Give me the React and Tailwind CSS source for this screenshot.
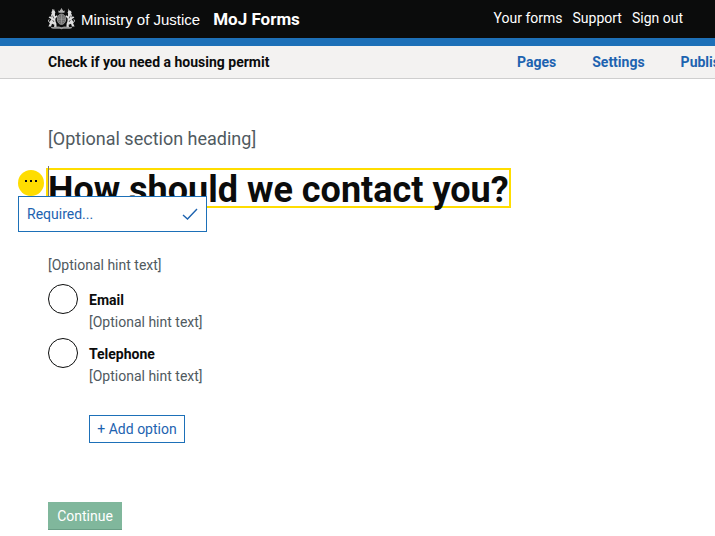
import { useState } from "react";

const headerLinks = ["Your forms", "Support", "Sign out"];
const options = ["Email", "Telephone"];

function Lion({ unicorn }) {
  return (
    <g>
      <circle cx="5.4" cy="4.4" r="1.9" />
      <path d="M4.2 5.4C2.6 6.3 2.9 8 4 9.4L2 8.2.6 9.6 3.4 11.2C2.4 12.4 1.2 14 1.8 15.6L.4 18.4H3L4 15.8 6.4 16.8 6 19.4H8.6L8.4 15.4C7.6 13.6 7 12 7.6 10.2L9.6 8.6 9 7.2 7 8.2C7 7 7.2 6.2 6.6 5.2Z" />
      <path d="M2.4 15C.2 14 .2 12 1.2 11.4" fill="none" stroke="currentColor" strokeWidth=".9" />
      {unicorn ? <path d="M5.4 3 6.8.2 6.6 3.4Z" /> : <path d="M4 2.8 4.2 1 5.2 2 6 1 6.6 2.8Z" />}
      <path d="M4.6 7.6 5.8 10.4M4.6 12 6 14" fill="none" stroke="#0b0c0c" strokeWidth=".6" />
    </g>
  );
}

function Crest() {
  return (
    <svg viewBox="0 0 27 22" className="h-[22px] w-[27px] shrink-0 text-[#dedede]" fill="currentColor" aria-hidden="true">
      <Lion />
      <g transform="translate(27 0) scale(-1 1)">
        <Lion unicorn />
      </g>
      <path d="M10.6 4.8 10.2 2.4 11.8 3 12.4 1.4 13.1 1.4V.2H13.9V1.4L14.6 1.4 15.2 3 16.8 2.4 16.4 4.8Z" fill="#b4b4b4" />
      <ellipse cx="13.5" cy="11.2" rx="4.2" ry="5.2" fill="#6c6c6c" stroke="#a4a4a4" strokeWidth=".8" />
      <path d="M13.5 6.6V15.8M9.8 11.2H17.2" fill="none" stroke="#a8a8a8" strokeWidth=".6" />
      <path d="M11 9.2H12.4M14.6 9.2H16M11 13.4H12.4M14.6 13.4H16" stroke="#8e8e8e" strokeWidth=".9" />
      <path d="M2.6 18.4C6 20.4 9 17.4 13.5 19.2 18 17.4 21 20.4 24.4 18.4L23.6 20.2C20 21.6 17 19.8 13.5 21.2 10 19.8 7 21.6 3.4 20.2Z" fill="#999" />
    </svg>
  );
}

function Header() {
  return (
    <header className="flex h-[46px] items-center border-b-8 border-[#1d70b8] bg-[#0b0c0c] pl-12 pr-8 text-white">
      <Crest />
      <span className="ml-1.5 pt-0.5 font-['Liberation_Sans',sans-serif] text-[15px]">Ministry of Justice</span>
      <a href="#home" className="ml-[13px] pt-0.5 text-[17px] font-bold">MoJ Forms</a>
      <nav aria-label="Account" className="ml-auto flex gap-2.5 pb-0.5 text-sm">
        {headerLinks.map((label) => (
          <a key={label} href="#account">{label}</a>
        ))}
      </nav>
    </header>
  );
}

function SubNav() {
  return (
    <div className="flex h-[33px] items-center overflow-hidden border-b border-[#cecece] bg-[#f3f2f1] pl-12 text-sm font-bold">
      <p className="w-[469px] shrink-0">Check if you need a housing permit</p>
      <nav aria-label="Form" className="flex gap-9 text-[#1d63b0]">
        <a href="#pages">Pages</a>
        <a href="#settings">Settings</a>
        <a href="#publishing">Publishing</a>
      </nav>
    </div>
  );
}

export default function App() {
  const [choice, setChoice] = useState("");
  return (
    <div className="min-h-screen overflow-x-hidden bg-white font-['Roboto',sans-serif] text-[#0b0c0c]">
      <Header />
      <SubNav />
      <main className="pl-12 pt-12">
        <p className="text-lg leading-6 text-[#505a5f]">[Optional section heading]</p>

        <div className="relative mt-[17px] w-fit">
          <h1 className="-ml-0.5 border-2 border-[#ffdd00] pt-1 text-[36px] leading-8 font-bold whitespace-nowrap">
            How should we contact you?
          </h1>
          <span className="absolute -top-0.5 left-0 h-9 w-px bg-[#777]" />
          <button type="button" aria-label="Question options" className="absolute -left-[30px] top-0.5 flex size-[26px] items-center justify-center gap-[3px] rounded-full bg-[#ffdd00] pb-1">
            <span className="size-0.5 bg-[#0b0c0c]" />
            <span className="size-0.5 bg-[#0b0c0c]" />
            <span className="size-0.5 bg-[#0b0c0c]" />
          </button>
          <button type="button" className="absolute -left-[30px] top-7 flex h-9 w-[189px] items-center justify-between border border-[#1d70b8] bg-white px-2 text-sm text-[#1d63b0]">
            Required...
            <svg viewBox="0 0 16 14" className="h-3.5 w-4" fill="none" stroke="currentColor" strokeWidth="1.4" aria-hidden="true">
              <path d="M1 8 5.5 12 15 2" />
            </svg>
          </button>
        </div>

        <fieldset className="mt-[47px] text-sm text-[#505a5f]">
          <legend className="leading-5">[Optional hint text]</legend>
          <div className="mt-[9px] flex flex-col gap-3.5">
            {options.map((label) => (
              <div key={label} className="flex h-10 items-start gap-[11px]">
                <input
                  type="radio"
                  id={label}
                  name="contact"
                  checked={choice === label}
                  onChange={() => setChoice(label)}
                  className="size-[30px] shrink-0 appearance-none rounded-full border border-[#0b0c0c] bg-white checked:border-8"
                />
                <div className="flex flex-col gap-0.5 pt-1.5 leading-5">
                  <label htmlFor={label} className="font-bold text-[#0b0c0c]">{label}</label>
                  <span>[Optional hint text]</span>
                </div>
              </div>
            ))}
          </div>
        </fieldset>

        <button type="button" className="mt-[37px] ml-[41px] block h-7 w-24 border border-[#1d70b8] text-sm text-[#1d63b0]">
          + Add option
        </button>
        <button type="button" className="mt-[59px] block h-7 w-[74px] border-b border-[#6a9e86] bg-[#80b79c] text-sm text-white">
          Continue
        </button>
      </main>
    </div>
  );
}
